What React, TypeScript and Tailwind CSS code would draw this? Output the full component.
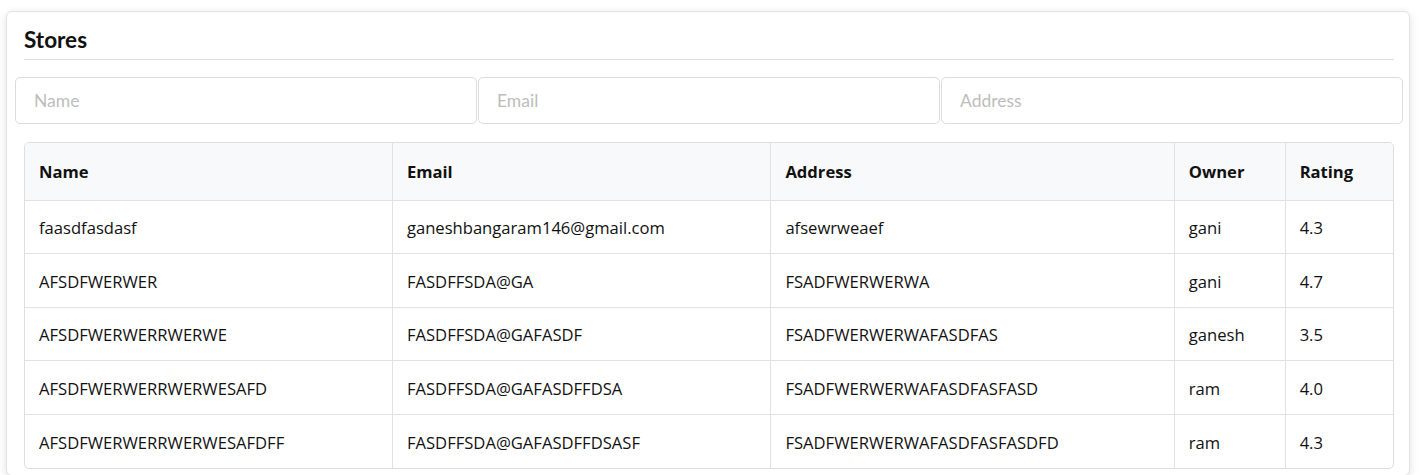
import React from "react";

const stores = [
  { name: "faasdfasdasf", email: "ganeshbangaram146@gmail.com", address: "afsewrweaef", owner: "gani", rating: "4.3" },
  { name: "AFSDFWERWER", email: "FASDFFSDA@GA", address: "FSADFWERWERWA", owner: "gani", rating: "4.7" },
  { name: "AFSDFWERWERRWERWE", email: "FASDFFSDA@GAFASDF", address: "FSADFWERWERWAFASDFAS", owner: "ganesh", rating: "3.5" },
  { name: "AFSDFWERWERRWERWESAFD", email: "FASDFFSDA@GAFASDFFDSA", address: "FSADFWERWERWAFASDFASFASD", owner: "ram", rating: "4.0" },
  { name: "AFSDFWERWERRWERWESAFDFF", email: "FASDFFSDA@GAFASDFFDSASF", address: "FSADFWERWERWAFASDFASFASDFD", owner: "ram", rating: "4.3" },
];

const cols = [
  { label: "Name", w: "w-[368px]" },
  { label: "Email", w: "w-[379px]" },
  { label: "Address", w: "w-[404px]" },
  { label: "Owner", w: "w-[111px]" },
  { label: "Rating", w: "w-[108px]" },
];

export default function App() {
  return (
    <div className="min-h-[475px] bg-white pl-[6px] pr-[16px] pt-[11px]">
      <div className="rounded-[6px] border border-[#e2e2e2] bg-white pb-[6px] pl-[8px] pr-[6px] shadow-[0_2px_8px_rgba(0,0,0,0.12)]">
        {/* header */}
        <div className="mx-[9px] border-b border-[#dedede] pb-[4px] pt-[13px]">
          <h2 className="text-[22.5px] font-bold leading-[30px] text-[#111] [font-family:Lato,sans-serif]">Stores</h2>
        </div>

        {/* filters */}
        <div className="mt-[17px] flex gap-[1px]">
          {["Name", "Email", "Address"].map((p) => (
            <input
              key={p}
              placeholder={p}
              className="h-[47px] flex-1 rounded-[5px] border border-[#dcdcdc] px-[18px] text-[17.5px] text-[#333] outline-none placeholder:text-[#bdbdbd] [font-family:Lato,sans-serif]"
            />
          ))}
        </div>

        {/* table */}
        <div className="ml-[9px] mr-[9px] mt-[18px] overflow-hidden rounded-[5px] border border-[#dedede]">
          <table className="w-full border-collapse text-left text-[16.6px] text-[#111] [font-family:'Open_Sans',sans-serif]">
            <thead className="bg-[#f8f9fa]">
              <tr>
                {cols.map((c, i) => (
                  <th
                    key={c.label}
                    className={`${c.w} h-[57px] px-[14px] pt-[2px] font-bold ${i > 0 ? "border-l border-[#e2e2e2]" : ""}`}
                  >
                    {c.label}
                  </th>
                ))}
              </tr>
            </thead>
            <tbody>
              {stores.map((s, r) => (
                <tr key={r} className="border-t border-[#e2e2e2]">
                  {[s.name, s.email, s.address, s.owner, s.rating].map((v, i) => (
                    <td key={i} className={`h-[53.5px] px-[14px] pt-[4px] ${i > 0 ? "border-l border-[#e2e2e2]" : ""}`}>
                      {v}
                    </td>
                  ))}
                </tr>
              ))}
            </tbody>
          </table>
        </div>
      </div>
    </div>
  );
}
